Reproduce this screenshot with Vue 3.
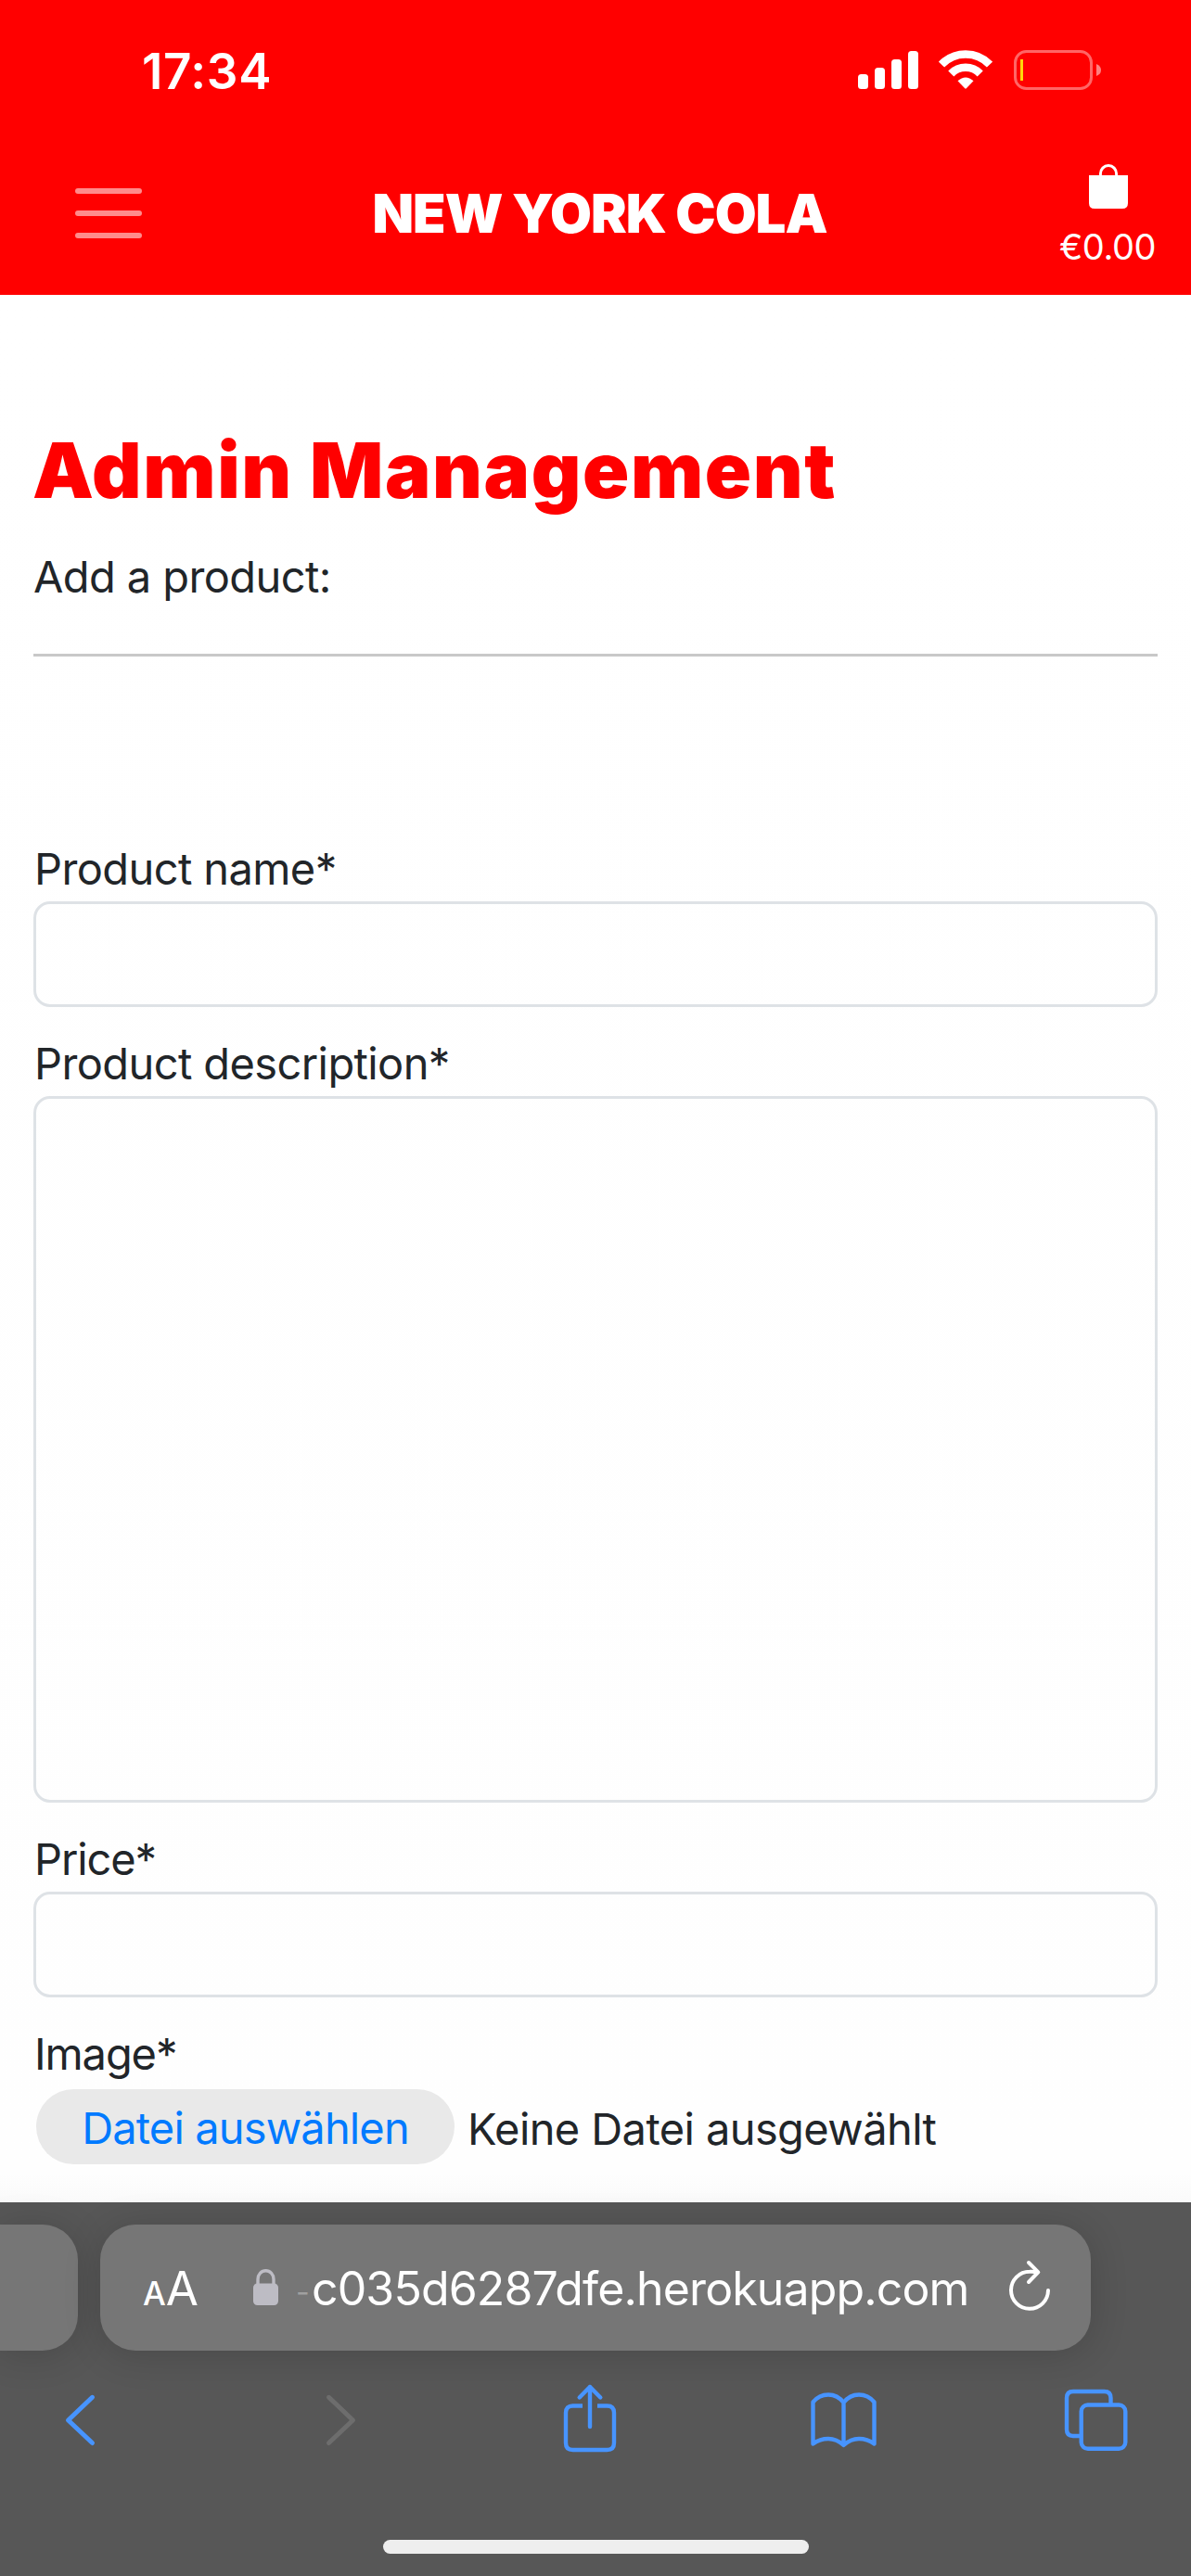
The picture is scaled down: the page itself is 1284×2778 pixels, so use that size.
<script setup>
const bars = [16, 23, 32, 41]
</script>

<template>
  <div class="screen">
    <header class="top">
      <div class="status">
        <span class="time">17:34</span>
        <div class="indicators">
          <div class="signal">
            <i v-for="h in bars" :key="h" :style="{ height: h + 'px' }"></i>
          </div>
          <svg class="wifi" width="58" height="42" viewBox="0 0 58 42">
            <g fill="none" stroke="#fff" stroke-width="8.6">
              <path d="M3 15.6 A36 36 0 0 1 55 15.6" />
              <path d="M13.3 25.4 A22 22 0 0 1 44.7 25.4" />
            </g>
            <path d="M20.5 33.3 Q29 25.6 37.5 33.3 L29.8 41.3 Q29 42 28.2 41.3 Z" fill="#fff" />
          </svg>
          <svg class="battery" width="95" height="43" viewBox="0 0 95 43">
            <rect x="1.5" y="1.5" width="82" height="40" rx="12" fill="none" stroke="#ff6666" stroke-width="3" />
            <rect x="7" y="10" width="3" height="23" fill="#ffd60a" />
            <path d="M89 15 Q94 17 94 21.5 Q94 26 89 28 Z" fill="#ff8080" />
          </svg>
        </div>
      </div>
      <nav class="navbar">
        <button class="menu" aria-label="Menu"><i></i><i></i><i></i></button>
        <span class="brand">NEW YORK COLA</span>
        <div class="bag">
          <svg width="42" height="48" viewBox="0 0 42 48">
            <path d="M0 12 H42 V42 Q42 48 36 48 H6 Q0 48 0 42 Z" fill="#fff" />
            <path d="M12.4 13 V10.5 A8.6 9 0 0 1 29.6 10.5 V13" fill="none" stroke="#fff" stroke-width="3" />
          </svg>
          <span>€0.00</span>
        </div>
      </nav>
    </header>

    <main class="content">
      <h1>Admin Management</h1>
      <p class="lead">Add a product:</p>
      <hr />
      <form>
        <label>Product name*</label>
        <input class="field" />
        <label>Product description*</label>
        <textarea class="field area"></textarea>
        <label class="short">Price*</label>
        <input class="field" />
        <label class="short">Image*</label>
        <div class="file">
          <button type="button">Datei auswählen</button>
          <span>Keine Datei ausgewählt</span>
        </div>
      </form>
    </main>

    <footer class="browser">
      <div class="tabs">
        <div class="prev"></div>
        <div class="address">
          <div class="aa"><span class="small">A</span><span class="large">A</span></div>
          <svg class="lock" width="27" height="39" viewBox="0 0 27 39">
            <rect y="15.5" width="27" height="23.5" rx="4.5" fill="#bdbcc4" />
            <path d="M5 17 V11 A8.5 9.3 0 0 1 22 11 V17" fill="none" stroke="#bdbcc4" stroke-width="3.4" />
          </svg>
          <span class="url"><span class="dash">-</span>c035d6287dfe.herokuapp.com</span>
          <svg class="reload" width="46" height="56" viewBox="0 0 46 56">
            <g fill="none" stroke="#fff" stroke-width="4" stroke-linecap="round" stroke-linejoin="round">
              <path d="M43 33 A20 20 0 1 1 23 12.8 Q27 12.6 31 13.2" />
              <path d="M22 3 L32.3 13.3 L22 24" />
            </g>
          </svg>
        </div>
      </div>
      <div class="tools">
        <svg width="72" height="80" viewBox="0 0 72 80">
          <path d="M49.5 17.3 L23.5 42 L49.5 66.5" class="line back" />
        </svg>
        <svg width="72" height="80" viewBox="0 0 72 80">
          <path d="M22.5 17.3 L48.5 42 L22.5 66.5" class="line forward" />
        </svg>
        <svg width="72" height="80" viewBox="0 0 72 80">
          <path class="line butt" d="M28 26.5 H17.5 Q10 26.5 10 34 V66.500 Q10 74 17.5 74 H54.5 Q62 74 62 66.5 V34 Q62 26.5 54.5 26.5 H44" />
          <path class="line" d="M36 49 V6 M24.7 17.5 L36 6 L47.3 17.5" />
        </svg>
        <svg width="72" height="80" viewBox="0 0 72 80">
          <path class="line" d="M35.5 23 Q29 14.5 19 14.5 Q9 14.5 2.5 22.5 V67.5 Q10 62 19 62 Q28 62 35.5 69 Q43 62 52 62 Q61 62 68.5 67.5 V22.5 Q62 14.5 52 14.5 Q42 14.5 35.5 23 V68" />
        </svg>
        <svg width="72" height="80" viewBox="0 0 72 80">
          <rect class="line" x="19.7" y="25.5" width="47.6" height="47.3" rx="7" />
          <path class="line butt" d="M18 59 H11 Q4 59 4 52 V18 Q4 11 11 11 H44.5 Q51.5 11 51.5 18 V24" />
        </svg>
      </div>
      <div class="home"></div>
    </footer>
  </div>
</template>

<style>
body {
  background: #fff;
}
</style>

<style scoped>
.screen {
  width: 1284px;
  height: 2778px;
  display: flex;
  flex-direction: column;
  overflow: hidden;
  font-family: Inter, "Liberation Sans", sans-serif;
  color: #212529;
  background: #fff;
}
* {
  box-sizing: border-box;
}
svg {
  display: block;
  flex: none;
}
.top {
  height: 318px;
  flex: none;
  background: #f00;
  color: #fff;
}
.status {
  height: 150px;
  display: flex;
  justify-content: space-between;
  padding: 54px 96px 0 153px;
}
.time {
  font-size: 53px;
  font-weight: 600;
  line-height: 46px;
  letter-spacing: 0.6px;
}
.indicators {
  display: flex;
  height: 43px;
}
.signal {
  display: flex;
  align-items: flex-end;
  gap: 7px;
  height: 42px;
  margin-right: 22px;
}
.signal i {
  width: 11px;
  border-radius: 3.5px;
  background: #fff;
}
.battery {
  margin-left: 23px;
}
.navbar {
  height: 168px;
  display: flex;
  justify-content: space-between;
  padding: 0 39px 0 81px;
}
.menu {
  border: 0;
  background: none;
  padding: 53px 0 0;
  width: 72px;
  display: flex;
  flex-direction: column;
  gap: 18px;
}
.menu i {
  height: 6px;
  border-radius: 3px;
  background: #ff8c8c;
}
.brand {
  margin-left: -3px;
  font-size: 58px;
  font-weight: 900;
  line-height: 160px;
  letter-spacing: -1px;
  white-space: nowrap;
}
.bag {
  display: flex;
  flex-direction: column;
  align-items: center;
  padding-top: 27px;
  width: 102px;
}
.bag svg {
  margin-left: 2px;
}
.bag span {
  margin-top: 18px;
  font-size: 38px;
  line-height: 46px;
  letter-spacing: -0.4px;
}
.content {
  flex: none;
  height: 2057px;
  padding: 139px 36px 0;
  background: linear-gradient(#fff, #fefefe 2025px, #fafafa);
}
h1 {
  margin: 0 0 0 -1px;
  height: 129px;
  font-size: 83px;
  font-weight: 900;
  line-height: 100px;
  color: #f00;
  letter-spacing: 1.6px;
  white-space: nowrap;
}
.lead {
  margin: 0;
  font-size: 47px;
  line-height: 72px;
  letter-spacing: -0.6px;
}
hr {
  margin: 47px 0 192px;
  border: 0;
  height: 3px;
  background: #c8c8c8;
}
form {
  display: flex;
  flex-direction: column;
}
label {
  padding: 1px 0 0 1px;
  font-size: 47px;
  line-height: 72px;
  height: 72px;
  letter-spacing: -0.6px;
}
.short {
  letter-spacing: -1.1px;
}
.field {
  display: block;
  width: 1212px;
  height: 114px;
  margin: 0 0 24px;
  border: 3px solid #dee2e6;
  border-radius: 18px;
  background: transparent;
  resize: none;
}
.area {
  height: 762px;
}
.file {
  display: flex;
  align-items: center;
  margin: 3px 0 0 3px;
  height: 81px;
  font-size: 47px;
  white-space: nowrap;
  letter-spacing: -0.6px;
}
.file button {
  width: 451px;
  height: 81px;
  padding: 1px 0 0;
  border: 0;
  border-radius: 41px;
  background: #e9e9e9;
  color: #007aff;
  font: inherit;
  letter-spacing: -0.85px;
}
.file span {
  margin-left: 14px;
  padding-top: 3px;
}
.browser {
  flex: 1;
  background: #575757;
}
.tabs {
  display: flex;
  gap: 24px;
  padding-top: 24px;
}
.prev,
.address {
  height: 136px;
  background: #767676;
  box-shadow: 0 4px 40px rgba(0, 0, 0, 0.16);
}
.prev {
  width: 84px;
  border-radius: 0 38px 38px 0;
}
.address {
  width: 1068px;
  border-radius: 38px;
  display: flex;
  color: #fff;
}
.aa {
  width: 165px;
  padding-left: 46px;
  line-height: 138px;
  white-space: nowrap;
}
.small {
  font-size: 35px;
  font-weight: 500;
}
.large {
  font-size: 51px;
}
.lock {
  margin-top: 48px;
}
.url {
  width: 741px;
  margin-left: 19px;
  font-size: 50px;
  line-height: 139px;
  letter-spacing: -0.87px;
  white-space: nowrap;
}
.dash {
  display: inline-block;
  width: 17px;
  color: #a0a0a0;
  font-size: 32px;
  vertical-align: 3px;
  line-height: 1;
}
.reload {
  margin: 38px 0 0 27px;
}
.tools {
  display: grid;
  grid-template-columns: 282px 268px 274px 272px 72px;
  padding: 33px 0 0 50px;
}
.line {
  fill: none;
  stroke: #4794ff;
  stroke-width: 4.4px;
  stroke-linecap: round;
  stroke-linejoin: round;
}
.butt {
  stroke-linecap: butt;
}
.back,
.forward {
  stroke-width: 5px;
}
.forward {
  stroke: #6d6d6d;
}
.home {
  width: 459px;
  height: 15px;
  margin: 91px 0 0 413px;
  border-radius: 8px;
  background: #eee;
}
</style>
